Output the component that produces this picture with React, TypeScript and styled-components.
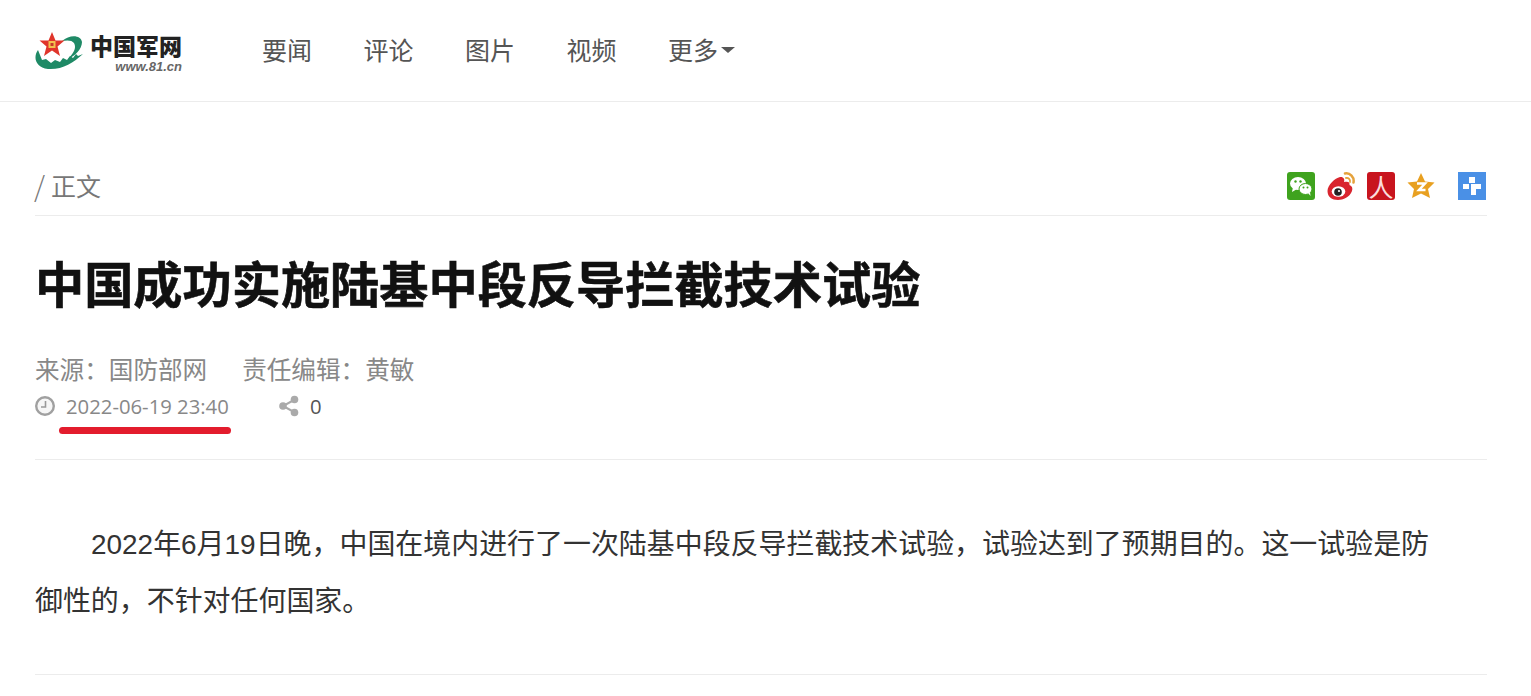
import styled, { createGlobalStyle } from 'styled-components'

const GlobalStyle = createGlobalStyle`
  html, body {
    margin: 0;
    padding: 0;
    background: #fff;
    font-family: "Noto Sans CJK SC", "Open Sans", sans-serif;
  }
`

const Header = styled.header`
  display: flex;
  align-items: center;
  height: 101px;
  padding-left: 35px;
  border-bottom: 1px solid #ececec;
`

const LogoWrap = styled.a`
  display: flex;
  align-items: flex-end;
  gap: 7px;
  width: 227px;
  height: 42px;
`

const LogoText = styled.div`
  display: flex;
  flex-direction: column;
  align-items: flex-end;
  width: 92px;
  margin-bottom: -1px;
`

const LogoTitle = styled.span`
  font-size: 23px;
  line-height: 24px;
  font-weight: 900;
  white-space: nowrap;
  color: #222;
`

const LogoUrl = styled.span`
  margin-top: 3px;
  font-family: "Liberation Sans", sans-serif;
  font-size: 13px;
  line-height: 13px;
  font-style: italic;
  font-weight: 700;
  color: #666;
`

const Nav = styled.nav`
  display: flex;
  gap: 51.5px;
  padding-bottom: 4px;
`

const NavItem = styled.a`
  display: flex;
  align-items: center;
  font-size: 25px;
  line-height: 36px;
  color: #555;
`

const Caret = styled.span`
  width: 0;
  height: 0;
  margin-left: 3px;
  margin-top: 3px;
  border-left: 7px solid transparent;
  border-right: 7px solid transparent;
  border-top: 6px solid #555;
`

const Main = styled.main`
  width: 1452px;
  margin-left: 35px;
`

const Crumbs = styled.div`
  display: flex;
  align-items: center;
  justify-content: space-between;
  height: 114px;
  box-sizing: border-box;
  border-bottom: 1px solid #ececec;
  padding-top: 55px;
`

const Crumb = styled.div`
  display: flex;
  margin-bottom: 2px;
  font-size: 25px;
  line-height: 42px;
  color: #777;
`

const Slash = styled.span`
  width: 17px;
  margin-left: -1px;
  font-size: 28px;
  font-weight: 300;
`

const Share = styled.div`
  display: flex;
  align-items: center;
  margin-right: 1px;
`

const ShareIcon = styled.a<{ $gap?: number }>`
  display: flex;
  width: 28px;
  height: 28px;
  margin-left: ${({ $gap }) => $gap ?? 12}px;
`

const RenrenBox = styled.span`
  display: flex;
  align-items: center;
  justify-content: center;
  width: 28px;
  height: 28px;
  border-radius: 3px;
  background: #c8141e;
  color: #fbdcdc;
  font-size: 25px;
  line-height: 28px;
  font-weight: 400;
`

const Title = styled.h1`
  margin: 35px 0 0;
  font-size: 49.2px;
  line-height: 62px;
  font-weight: 700;
  -webkit-text-stroke: 0.6px #111;
  color: #111;
`

const Meta = styled.div`
  margin-top: 36px;
  padding-bottom: 35px;
  border-bottom: 1px solid #ececec;
`

const MetaLine = styled.div`
  display: flex;
  gap: 35px;
  font-size: 24.6px;
  line-height: 38px;
  color: #888;
`

const InfoLine = styled.div`
  display: flex;
  align-items: center;
  height: 36px;
  margin-top: 1px;
`

const DateText = styled.span`
  position: relative;
  margin-left: 11px;
  font-family: "Open Sans", sans-serif;
  font-size: 20.3px;
  color: #888;
  width: 212px;
`

const RedMark = styled.span`
  position: absolute;
  left: -7px;
  top: 35px;
  width: 172px;
  height: 7px;
  border-radius: 4px;
  background: #e31c2d;
`

const ShareCount = styled.span`
  margin-left: 10px;
  font-family: "Open Sans", sans-serif;
  font-size: 20.3px;
  color: #555;
`

const Article = styled.article`
  padding: 55.5px 0 44.5px;
  border-bottom: 1px solid #ececec;
`

const Paragraph = styled.p`
  margin: 0;
  width: 1400px;
  font-family: "Liberation Sans", "Noto Sans CJK SC", sans-serif;
  font-size: 27.95px;
  line-height: 57px;
  text-indent: 56px;
  color: #333;
`

function LogoMark() {
  return (
    <svg width="48" height="40" viewBox="0 0 48 40">
      <path
        d="M27 9C35 2 46 3 47 10C47 17 40 24 33 27C38 22 42 16 39 11C37 8 32 8 27 9Z"
        fill="#1f8a66"
      />
      <path
        d="M3 18C-2 25 0 35 13 37C27 38 38 31 48 22L43 24L41 22L38 26L35 24L32 28L28 26L25 30L20 28L16 31L11 27L7 28Z"
        fill="#1f8a66"
      />
      <path d="M17 0L20.500 8.500L29.500 8.500L22.500 14.500L25 24L17 18.500L9 24L11.500 14.500L4.500 8.500L13.500 8.500Z" fill="#e0352b" />
      <rect x="13.500" y="9" width="7" height="7" fill="#f2c14e" />
      <rect x="15.500" y="11" width="3" height="3" fill="#c6392a" />
    </svg>
  )
}

function WechatIcon() {
  return (
    <svg width="28" height="28" viewBox="0 0 28 28">
      <rect width="28" height="28" rx="3" fill="#3fa31e" />
      <ellipse cx="11" cy="11.500" rx="8" ry="6.500" fill="#fff" />
      <path d="M6 15L5 20L10 17Z" fill="#fff" />
      <ellipse cx="18.500" cy="17" rx="6.500" ry="5.500" fill="#fff" stroke="#3fa31e" strokeWidth="1" />
      <path d="M21 21L23.500 24L23 20Z" fill="#fff" />
      <circle cx="8.500" cy="9.500" r="1.200" fill="#3fa31e" />
      <circle cx="13.500" cy="9.500" r="1.200" fill="#3fa31e" />
      <circle cx="16.500" cy="15.500" r="1" fill="#3fa31e" />
      <circle cx="20.500" cy="15.500" r="1" fill="#3fa31e" />
    </svg>
  )
}

function WeiboIcon() {
  return (
    <svg width="28" height="28" viewBox="0 0 28 28">
      <path
        d="M0.500 19C0.500 13 8 6 13 5C16.500 4.500 18 7 17 10C21 9 23 10 22.500 13C25 14 26 16 25 19C23 25 16 28 11 28C5 28 0.500 25 0.500 19Z"
        fill="#d9252e"
      />
      <ellipse cx="11.500" cy="19.500" rx="6.800" ry="5.200" fill="#fff" />
      <circle cx="11" cy="20" r="3.800" fill="#222" />
      <circle cx="12" cy="19" r="1.100" fill="#fff" />
      <path d="M18 1.500C23 0.500 27.500 5 26.500 10.500" fill="none" stroke="#e5a23c" strokeWidth="2.500" strokeLinecap="round" />
      <path d="M19 6C21.500 5.500 23.500 7.500 23 10" fill="none" stroke="#e5a23c" strokeWidth="1.800" strokeLinecap="round" />
    </svg>
  )
}

function QzoneIcon() {
  return (
    <svg width="28" height="28" viewBox="0 0 28 28">
      <path
        d="M14 1L18 9.500L27.500 10.500L21 17L23 26L14 21.500L5 26L7 17L0.500 10.500L10 9.500Z"
        fill="#e8a020"
      />
      <path d="M10 11.500H18L12 18H18.500" fill="none" stroke="#fff" strokeWidth="2.500" />
    </svg>
  )
}

function MoreIcon() {
  return (
    <svg width="28" height="28" viewBox="0 0 28 28">
      <rect width="28" height="28" fill="#4a90e6" />
      <rect x="11" y="5" width="6" height="6" fill="#fff" />
      <rect x="5" y="12" width="6" height="5" fill="#fff" />
      <path d="M13 12H23V17H18V23H13Z" fill="#fff" />
    </svg>
  )
}

function ClockIcon() {
  return (
    <svg width="20" height="20" viewBox="0 0 20 20">
      <circle cx="10" cy="10" r="8.800" fill="#f6f6f6" stroke="#a0a0a0" strokeWidth="2.400" />
      <path d="M10.500 5V11H6" fill="none" stroke="#999" strokeWidth="1.600" />
    </svg>
  )
}

function ShareNodesIcon() {
  return (
    <svg width="22" height="22" viewBox="0 0 22 22">
      <path d="M16 5L5 11L16 17" fill="none" stroke="#aaa" strokeWidth="2" />
      <circle cx="16.500" cy="4.500" r="3.800" fill="#aaa" />
      <circle cx="5" cy="11" r="3.800" fill="#aaa" />
      <circle cx="16.500" cy="17.500" r="3.800" fill="#aaa" />
    </svg>
  )
}

export default function App() {
  return (
    <>
      <GlobalStyle />
      <Header>
        <LogoWrap>
          <LogoMark />
          <LogoText>
            <LogoTitle>中国军网</LogoTitle>
            <LogoUrl>www.81.cn</LogoUrl>
          </LogoText>
        </LogoWrap>
        <Nav>
          <NavItem>要闻</NavItem>
          <NavItem>评论</NavItem>
          <NavItem>图片</NavItem>
          <NavItem>视频</NavItem>
          <NavItem>
            更多
            <Caret />
          </NavItem>
        </Nav>
      </Header>
      <Main>
        <Crumbs>
          <Crumb>
            <Slash>/</Slash>正文
          </Crumb>
          <Share>
            <ShareIcon>
              <WechatIcon />
            </ShareIcon>
            <ShareIcon>
              <WeiboIcon />
            </ShareIcon>
            <ShareIcon>
              <RenrenBox>人</RenrenBox>
            </ShareIcon>
            <ShareIcon>
              <QzoneIcon />
            </ShareIcon>
            <ShareIcon $gap={23}>
              <MoreIcon />
            </ShareIcon>
          </Share>
        </Crumbs>
        <Title>中国成功实施陆基中段反导拦截技术试验</Title>
        <Meta>
          <MetaLine>
            <span>来源&#xFF1A;国防部网</span>
            <span>责任编辑&#xFF1A;黄敏</span>
          </MetaLine>
          <InfoLine>
            <ClockIcon />
            <DateText>
              2022-06-19 23:40
              <RedMark />
            </DateText>
            <ShareNodesIcon />
            <ShareCount>0</ShareCount>
          </InfoLine>
        </Meta>
        <Article>
          <Paragraph>
            2022年6月19日晚&#xFF0C;中国在境内进行了一次陆基中段反导拦截技术试验&#xFF0C;试验达到了预期目的。这一试验是防御性的&#xFF0C;不针对任何国家。
          </Paragraph>
        </Article>
      </Main>
    </>
  )
}
